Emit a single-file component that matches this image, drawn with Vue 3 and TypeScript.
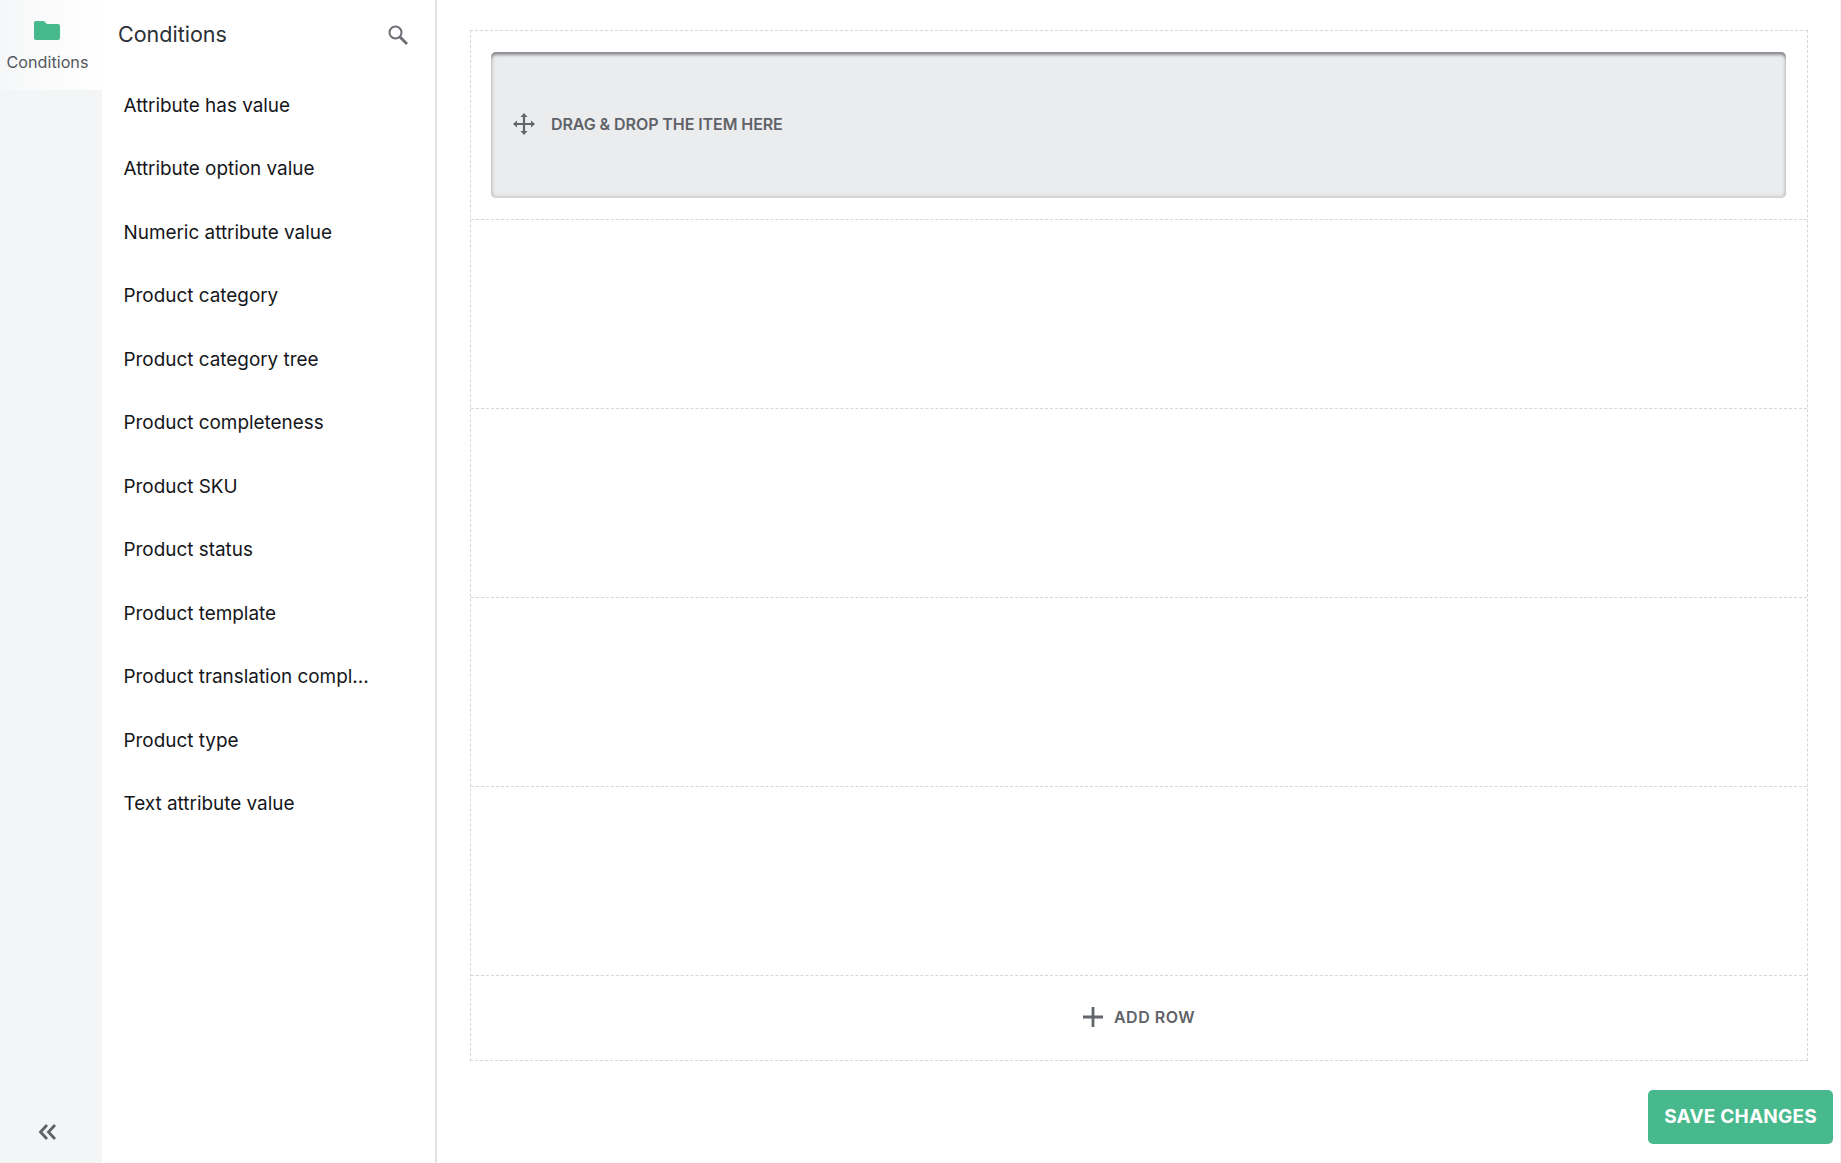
<script setup lang="ts">
const items: string[] = [
  'Attribute has value',
  'Attribute option value',
  'Numeric attribute value',
  'Product category',
  'Product category tree',
  'Product completeness',
  'Product SKU',
  'Product status',
  'Product template',
  'Product translation compl...',
  'Product type',
  'Text attribute value',
]
</script>

<template>
  <div class="page">
    <nav class="rail">
      <div class="tab">
        <svg class="folder" width="26" height="20" viewBox="0 0 26 20">
          <path fill="#48b98c" d="M2 1h8l3 3h11a2 2 0 0 1 2 2v12a2 2 0 0 1-2 2H2a2 2 0 0 1-2-2V3a2 2 0 0 1 2-2z" />
        </svg>
        <span class="tab-label">Conditions</span>
      </div>
      <button class="collapse" type="button" aria-label="Collapse">
        <svg width="20" height="18" viewBox="0 0 20 18" fill="none" stroke="#5f6268" stroke-width="2.8">
          <path d="M9 2 2.500 9 9 16M17 2l-6.500 7 6.500 7" />
        </svg>
      </button>
    </nav>
    <aside class="side">
      <header class="side-head">
        <h2 class="side-title">Conditions</h2>
        <svg width="22" height="22" viewBox="0 0 22 22" fill="none" stroke="#6b6e73">
          <circle cx="8.500" cy="8.500" r="6" stroke-width="2" />
          <path d="m13 13 7 7" stroke-width="2.800" />
        </svg>
      </header>
      <ul class="list">
        <li v-for="item in items" :key="item" class="item">{{ item }}</li>
      </ul>
    </aside>
    <main class="main">
      <section class="board">
        <div class="row first">
          <div class="drop">
            <svg width="22" height="22" viewBox="0 0 22 22" fill="#62656b" stroke="#62656b">
              <path d="M11 2v18M2 11h18" fill="none" stroke-width="2.200" />
              <path stroke="none" d="M11 0l3.500 4h-7zM11 22l-3.500-4h7zM0 11l4-3.500v7zM22 11l-4 3.500v-7z" />
            </svg>
            <span>DRAG &amp; DROP THE ITEM HERE</span>
          </div>
        </div>
        <div class="row"></div>
        <div class="row"></div>
        <div class="row"></div>
        <div class="row"></div>
        <div class="add">
          <svg width="20" height="20" viewBox="0 0 20 20" stroke="#62656b" stroke-width="2.800">
            <path d="M10 0v20M0 10h20" />
          </svg>
          <span>ADD ROW</span>
        </div>
      </section>
      <footer class="foot">
        <button class="save" type="button">SAVE CHANGES</button>
      </footer>
    </main>
  </div>
</template>

<style>
html, body { margin: 0; background: #fff; }
</style>

<style scoped>
.page {
  display: flex;
  height: 1163px;
  font-family: Inter, "Liberation Sans", sans-serif;
  overflow: hidden;
  border-right: 1px solid #f1f1f1;
  box-sizing: border-box;
}
.rail {
  width: 102px;
  flex: none;
  background: #f4f5f7;
  display: flex;
  flex-direction: column;
  justify-content: space-between;
}
.tab {
  height: 90px;
  background: linear-gradient(90deg, #f6f7f8, #fff);
  display: flex;
  flex-direction: column;
  align-items: center;
  padding: 20px 7px 0 0;
  box-sizing: border-box;
}
.folder { display: block; margin-right: 1px; }
.tab-label { margin-top: 11px; font-size: 16.200px; line-height: 22px; color: #55585e; }
.collapse {
  border: 0;
  background: none;
  padding: 0;
  height: 18px;
  margin: 0 7px 22px 0;
  display: flex;
  justify-content: center;
}
.side {
  width: 335px;
  flex: none;
  box-sizing: border-box;
  border-right: 2px solid #e3e4e6;
}
.side-head {
  height: 69px;
  display: flex;
  align-items: center;
  justify-content: space-between;
  padding: 0 26px 0 16px;
}
.side-title { margin: 0 0 2px; font-size: 21.500px; font-weight: 400; color: #2b2f36; }
.list { list-style: none; margin: 0; padding: 4.500px 0 0 21.500px; }
.item { height: 63.500px; line-height: 63px; font-size: 18.900px; color: #14161a; white-space: nowrap; }
.main {
  flex: 1;
  min-width: 0;
  padding: 30px 32px 0 33px;
  display: flex;
  flex-direction: column;
}
.board {
  border: 1px dashed #d6d6d6;
  height: 1031px;
  box-sizing: border-box;
}
.row { height: 189px; border-bottom: 1px dashed #d6d6d6; box-sizing: border-box; }
.first { padding: 21px 21px 0 20px; }
.drop {
  height: 146px;
  box-sizing: border-box;
  background: #ebecee;
  border-radius: 5px;
  box-shadow: inset 0 4px 3px -1px #8d8f92, inset 0 -3px 3px -1px #d0d1d3, inset 3px 0 3px -1px #d0d1d3, inset -3px 0 3px -1px #d0d1d3;
  display: flex;
  align-items: center;
  gap: 16px;
  padding: 0 0 3px 22px;
  font-size: 16px;
  font-weight: 600;
  letter-spacing: -0.08px;
  color: #5f6268;
}
.add {
  height: 83px;
  box-sizing: border-box;
  padding-bottom: 1px;
  display: flex;
  align-items: center;
  justify-content: center;
  gap: 11px;
  font-size: 16px;
  font-weight: 600;
  letter-spacing: 0.5px;
  color: #5f6268;
}
.foot {
  display: flex;
  justify-content: flex-end;
  margin: 29px -25px 0 0;
}
.save {
  width: 185px;
  height: 54px;
  border: 0;
  border-radius: 5px;
  background: #48b98c;
  color: #fff;
  font-family: inherit;
  font-size: 19px;
  font-weight: 700;
  letter-spacing: 0.2px;
  padding: 0 0 2px;
}
</style>
